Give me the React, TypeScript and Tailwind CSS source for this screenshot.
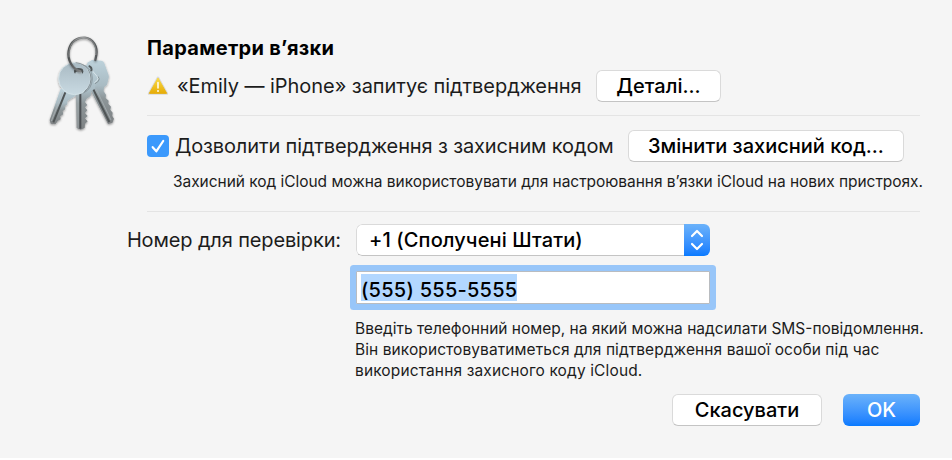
import { useState, type ReactNode } from 'react'
import { clsx } from 'clsx'

function KeysIcon() {
  return (
    <svg viewBox="0 0 330 360" className="w-[110px] h-[120px]" aria-hidden="true">
      <defs>
        <linearGradient id="keyHead" x1="0" y1="0" x2="0" y2="1">
          <stop offset="0" stopColor="#a9bac3" />
          <stop offset="1" stopColor="#c9dae2" />
        </linearGradient>
        <linearGradient id="keyBack" x1="0" y1="0" x2="0" y2="1">
          <stop offset="0" stopColor="#bdd2db" />
          <stop offset="0.4" stopColor="#a9bbc3" />
          <stop offset="0.6" stopColor="#8d9699" />
          <stop offset="1" stopColor="#7d8183" />
        </linearGradient>
        <linearGradient id="ring" x1="0" y1="0" x2="1" y2="0">
          <stop offset="0" stopColor="#4d5051" />
          <stop offset="0.5" stopColor="#8b8d8e" />
          <stop offset="1" stopColor="#55585a" />
        </linearGradient>
        <filter id="keyShadow" x="-20%" y="-20%" width="140%" height="140%">
          <feDropShadow dx="0" dy="3" stdDeviation="3" floodColor="#000" floodOpacity="0.4" />
        </filter>
      </defs>
      <g filter="url(#keyShadow)">
        <path
          d="M172 128 L186 120 L214 122 Q221 123 223 130 L236 166 Q238 172 235 178 L231 194 L222 202 L221 214 L228 224 L227 234 L236 242 L235 251 L243 260 L241 269 L248 278 L247 288 L252 296 L247 309 L234 312 L180 208 L164 186 Z"
          fill="url(#keyBack)"
        />
        <path d="M190 208 L238 306" stroke="#4f5456" strokeWidth="6" fill="none" />
        <path d="M198 206 L243 300" stroke="#aeb6b9" strokeWidth="2" fill="none" />
        <path
          d="M92 206 L59 300 L62 311 L76 313 L84 302 L92 298 L91 289 L100 283 L98 274 L106 267 L104 259 L112 253 L112 244 L121 237 L136 228 L140 210 Z"
          fill="url(#keyBack)"
        />
        <path d="M106 217 L70 307" stroke="#4f5456" strokeWidth="6" fill="none" />
        <path d="M98 217 L64 303" stroke="#b0b8bb" strokeWidth="2" fill="none" />
        <path
          d="M166 134 Q185 139 190 154 L205 168 Q213 176 208 185 L197 192 L195 205 L184 214 L182 228 L170 236 L165 246 L172 255 L165 262 L172 271 L165 279 L173 288 L165 295 L173 304 L165 312 L164 324 L152 329 L140 324 L138 210 Z"
          fill="url(#keyBack)"
        />
        <path d="M151 220 V326" stroke="#4b5052" strokeWidth="6" fill="none" />
        <path d="M144 220 V324" stroke="#b0b8bb" strokeWidth="2" fill="none" />
        <path d="M204 169 Q211 177 205 184 L195 191" stroke="#6b7579" strokeWidth="2" fill="none" />
        <path d="M185 150 L201 169 Q207 176 201 182 L193 188" stroke="#e5eef1" strokeWidth="2" fill="none" />
        <path d="M158 134 Q187 143 187 176 Q186 207 160 219" stroke="#778286" strokeWidth="2" fill="none" />
        <circle cx="134" cy="176" r="48" fill="url(#keyHead)" stroke="#d5e3e8" strokeWidth="2.5" />
        <path d="M137 128 A48 48 0 0 1 163 215" stroke="#798388" strokeWidth="2.5" fill="none" />
      </g>
      <ellipse cx="146" cy="154" rx="14" ry="10" fill="#515759" />
      <ellipse cx="146" cy="160" rx="10" ry="6" fill="#bccbd2" />
      <path d="M176 138 Q187 141 184 154" fill="none" stroke="#515759" strokeWidth="6" />
      <g filter="url(#keyShadow)">
        <path
          d="M151 154 C126 147 112 119 116 93 C121 64 142 51 165 53 C190 56 203 81 199 105 L196 120"
          fill="none"
          stroke="url(#ring)"
          strokeWidth="7"
          strokeLinecap="round"
        />
      </g>
      <path
        d="M117 112 C112 75 137 50 164 53 C188 56 201 80 198 105"
        fill="none"
        stroke="#b0b2b2"
        strokeWidth="1.5"
      />
    </svg>
  )
}

function WarningIcon() {
  return (
    <svg viewBox="0 0 66 60" className="w-[22px] h-5 shrink-0" aria-hidden="true">
      <defs>
        <linearGradient id="warn" x1="0" y1="0" x2="0" y2="1">
          <stop offset="0" stopColor="#fadb45" />
          <stop offset="1" stopColor="#e6ac08" />
        </linearGradient>
      </defs>
      <path d="M33 5 L60 53 H6 Z" fill="#d9d9d9" stroke="#d9d9d9" strokeWidth="7" strokeLinejoin="round" />
      <path d="M33 6 L59 52 H7 Z" fill="url(#warn)" stroke="url(#warn)" strokeWidth="3" strokeLinejoin="round" />
      <path d="M33 20 V36" stroke="#fffbe8" strokeWidth="5" strokeLinecap="round" />
      <circle cx="33" cy="45" r="3" fill="#fffbe8" />
    </svg>
  )
}

type PushButtonProps = {
  children: ReactNode
  className?: string
  primary?: boolean
}

function PushButton({ children, className, primary }: PushButtonProps) {
  return (
    <button
      className={clsx(
        'h-8 shrink-0 rounded-[6px] flex items-center justify-center whitespace-nowrap font-medium',
        primary
          ? 'bg-linear-to-b from-[#6bb2fa] to-[#067aff] text-white'
          : 'bg-white text-black border border-[#dadada] border-b-[#c4c4c4]',
        className
      )}
    >
      {children}
    </button>
  )
}

export default function App() {
  const [allowCode, setAllowCode] = useState(true)

  return (
    <div className="w-[952px] h-[460px] bg-white font-['Inter','Liberation_Sans',sans-serif] text-[20px] leading-6 text-[#1c1c1c]">
      <main className="flex h-[458px] bg-[#f5f5f5]">
        <div className="w-[117px] -mr-[117px] pl-[30px] pt-5 shrink-0">
          <KeysIcon />
        </div>

        <div className="flex flex-col w-[952px] shrink-0">
          <section className="ml-[147px] mr-8 pt-9 h-[116px] border-b border-[#e4e4e4]">
            <h1 className="font-bold text-black whitespace-nowrap tracking-[0.3px]">Параметри в’язки</h1>
            <div className="flex items-center mt-[10px] h-8">
              <WarningIcon />
              <span className="ml-2 w-[419px] whitespace-nowrap tracking-[-0.05px]">
                «Emily — iPhone» запитує підтвердження
              </span>
              <PushButton className="w-[125px]">Деталі...</PushButton>
            </div>
          </section>

          <section className="ml-[147px] mr-8 pt-[14px] h-24 border-b border-[#e4e4e4]">
            <div className="flex items-center h-8">
              <button
                role="checkbox"
                aria-checked={allowCode}
                onClick={() => setAllowCode(!allowCode)}
                className="size-[22px] shrink-0 rounded-[4px] bg-[#3b99fc] flex items-center justify-center"
              >
                {allowCode && (
                  <svg viewBox="0 0 22 22" className="size-[22px]" fill="none">
                    <path
                      d="M5.7 12.2 L9.3 16.3 L16.2 6"
                      stroke="#fff"
                      strokeWidth="2.2"
                      strokeLinecap="round"
                      strokeLinejoin="round"
                    />
                  </svg>
                )}
              </button>
              <span className="ml-[6px] w-[453px] shrink-0 whitespace-nowrap tracking-[-0.14px]">
                Дозволити підтвердження з захисним кодом
              </span>
              <PushButton className="w-[276px]">Змінити захисний код...</PushButton>
            </div>
            <p className="mt-[10px] ml-[26px] text-[15.5px] leading-5 whitespace-nowrap tracking-[-0.04px]">
              Захисний код iCloud можна використовувати для настроювання в’язки iCloud на нових пристроях.
            </p>
          </section>

          <section className="grid grid-cols-[341px_1fr] gap-x-[15px] pt-3">
            <span className="text-right leading-[33px] h-8 whitespace-nowrap tracking-[-0.13px]">
              Номер для перевірки:
            </span>
            <button className="flex w-[354px] h-8 rounded-[6px] overflow-hidden bg-white text-black font-medium">
              <span className="flex-1 h-8 pl-3 text-left leading-[31px] whitespace-nowrap tracking-[0.12px] rounded-l-[6px] border border-r-0 border-[#dadada] border-b-[#c4c4c4]">
                +1 (Сполучені Штати)
              </span>
              <span className="w-[26px] bg-linear-to-b from-[#6bb2fa] to-[#067aff]">
                <svg viewBox="0 0 26 32" className="w-[26px] h-8" fill="none">
                  <path
                    d="M8 12 L13 7 L18 12 M8 20 L13 25 L18 20"
                    stroke="#fff"
                    strokeWidth="2.2"
                    strokeLinecap="round"
                    strokeLinejoin="round"
                  />
                </svg>
              </span>
            </button>

            <div className="col-start-2 mt-[15px] w-[354px] h-[33px] flex items-center bg-white border border-[#b9bcc0] ring-[6px] ring-[#98c6f9] rounded-[1px] pl-1">
              <span className="bg-[#b2d7ff] text-black font-medium h-[27px] leading-[33px] -mr-px whitespace-nowrap tracking-[0.25px]">
                (555) 555-5555
              </span>
            </div>

            <div className="col-start-2 -ml-px mt-[14px] text-[15.5px] leading-[21px] whitespace-nowrap">
              <p>Введіть телефонний номер, на який можна надсилати SMS-повідомлення.</p>
              <p className="tracking-[0.08px]">Він використовуватиметься для підтвердження вашої особи під час</p>
              <p className="tracking-[0.13px]">використання захисного коду iCloud.</p>
            </div>
          </section>

          <footer className="flex justify-end gap-[21px] pr-8 mt-[13px]">
            <PushButton className="w-[150px]">Скасувати</PushButton>
            <PushButton className="w-[77px]" primary>
              OK
            </PushButton>
          </footer>
        </div>
      </main>
    </div>
  )
}
